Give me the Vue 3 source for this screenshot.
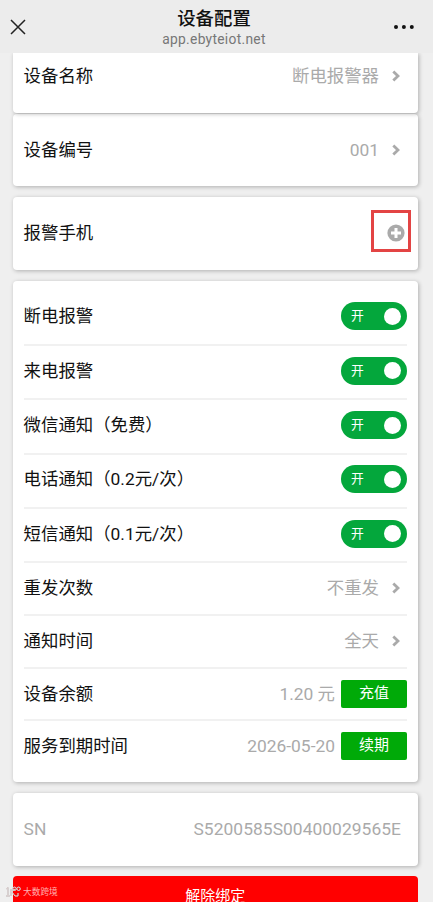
<script setup>
const switches = ['断电报警', '来电报警', '微信通知（免费）', '电话通知（0.2元/次）', '短信通知（0.1元/次）']
const choices = [
  { label: '重发次数', value: '不重发' },
  { label: '通知时间', value: '全天' },
]
const payments = [
  { label: '设备余额', value: '1.20 元', action: '充值' },
  { label: '服务到期时间', value: '2026-05-20', action: '续期' },
]
</script>

<template>
  <div class="screen">
    <header class="bar">
      <svg class="close" viewBox="0 0 16 16"><path d="M1 1L15 15M15 1L1 15" /></svg>
      <div class="heading">
        <h1>设备配置</h1>
        <p>app.ebyteiot.net</p>
      </div>
      <svg class="more" viewBox="0 0 20 6">
        <circle cx="2" cy="3" r="2" /><circle cx="9.9" cy="3" r="2" /><circle cx="17.8" cy="3" r="2" />
      </svg>
    </header>

    <main class="content">
      <section class="card name">
        <span>设备名称</span>
        <span class="value">断电报警器</span>
        <svg class="chevron" viewBox="0 0 8 12"><path d="M1.3 1.5L6 6L1.3 10.5" /></svg>
      </section>
      <section class="card single number">
        <span>设备编号</span>
        <span class="value">001</span>
        <svg class="chevron" viewBox="0 0 8 12"><path d="M1.3 1.5L6 6L1.3 10.5" /></svg>
      </section>
      <section class="card single phone">
        <span>报警手机</span>
        <button class="add">
          <svg viewBox="0 0 18 18"><circle cx="9" cy="9" r="8.6" /><path d="M9 4V14M4 9H14" /></svg>
        </button>
      </section>

      <section class="card settings">
        <div v-for="item in switches" :key="item" class="row toggle-row">
          <span>{{ item }}</span>
          <span class="switch"><span class="on">开</span><i class="knob"></i></span>
        </div>
        <div v-for="item in choices" :key="item.label" class="row choice-row">
          <span>{{ item.label }}</span>
          <span class="value">{{ item.value }}</span>
          <svg class="chevron" viewBox="0 0 8 12"><path d="M1.3 1.5L6 6L1.3 10.5" /></svg>
        </div>
        <div v-for="item in payments" :key="item.label" class="row pay-row">
          <span>{{ item.label }}</span>
          <span class="value">{{ item.value }}</span>
          <button class="pay">{{ item.action }}</button>
        </div>
      </section>

      <section class="card single serial">
        <span>SN</span>
        <span class="code">S5200585S00400029565E</span>
      </section>
      <button class="unbind">解除绑定</button>
    </main>

    <div class="watermark">
      <svg viewBox="0 0 16 12">
        <path d="M1 3L3 1.5V10M1 10H5M6 3V10M6 6L10 3M7 6L10 10H13M13 7V10" />
        <circle cx="9.5" cy="2.8" r="1.7" /><circle cx="13.6" cy="2.8" r="1.7" />
      </svg>
      <span>大数跨境</span>
    </div>
  </div>
</template>

<style>
body {
  background: #efefef;
}
</style>

<style scoped>
.screen {
  position: relative;
  box-sizing: border-box;
  height: 902px;
  overflow: hidden;
  background: #efefef;
  color: #111;
  font: 17.4px/24px Roboto, "Noto Sans CJK SC", sans-serif;
}
button {
  padding: 0;
  border: 0;
  font-family: inherit;
}
.bar {
  display: flex;
  align-items: center;
  justify-content: space-between;
  box-sizing: border-box;
  height: 53px;
  padding: 0 19px 0 10px;
  background: #ececec;
}
.close {
  width: 16px;
  height: 16px;
  fill: none;
  stroke: #222;
  stroke-width: 1.5;
}
.heading {
  padding: 1px 0 0 8px;
  text-align: center;
}
h1 {
  margin: 0;
  font-size: 18.4px;
  font-weight: 500;
  line-height: 24px;
}
p {
  margin: 0;
  color: #777;
  font-size: 13.8px;
  line-height: 17px;
  letter-spacing: 0.3px;
}
.more {
  width: 20px;
  height: 6px;
  fill: #111;
}
.content {
  display: flex;
  flex-direction: column;
  padding: 0 15px 0 12.6px;
}
.card {
  display: flex;
  align-items: center;
  box-sizing: border-box;
  padding: 0 11px;
  border-radius: 4px;
  background: #fff;
  box-shadow: 1px 1px 4px rgba(0, 0, 0, 0.27);
}
.card > span:first-child,
.row > span:first-child {
  flex: 1;
}
.name {
  height: 60px;
  padding-bottom: 13.6px;
  border-radius: 0 0 4px 4px;
  clip-path: inset(0 -6px -6px -6px);
}
.single {
  height: 73px;
  padding-bottom: 2px;
}
.number {
  height: 72px;
  margin-top: 1px;
  margin-bottom: 11px;
  padding-bottom: 1px;
}
.value {
  color: #aaa;
}
.chevron {
  width: 8px;
  height: 12px;
  margin: 0 7px 0 13px;
  fill: none;
  stroke: #aaa;
  stroke-width: 2.8;
}
.add {
  display: flex;
  align-items: center;
  justify-content: flex-end;
  box-sizing: border-box;
  width: 40px;
  height: 42px;
  margin: -3px -4px 0 0;
  padding-top: 4px;
  padding-right: 3.5px;
  border: 3px solid #e34444;
  background: none;
}
.add svg {
  width: 18px;
  height: 18px;
  fill: #aaa;
}
.add path {
  stroke: #fff;
  stroke-width: 3;
}
.settings {
  display: block;
  height: 501px;
  margin: 11px 0;
  padding-top: 10.8px;
}
.row {
  display: flex;
  align-items: center;
  box-sizing: border-box;
  border-bottom: 2px solid #f1f1f1;
}
.toggle-row {
  height: 54.3px;
  padding-bottom: 3px;
}
.choice-row {
  height: 52.8px;
  padding-bottom: 0.6px;
}
.pay-row {
  height: 52.2px;
}
.pay-row:last-child {
  height: 49px;
  border-bottom: 0;
}
.switch {
  display: flex;
  align-items: center;
  justify-content: space-between;
  box-sizing: border-box;
  width: 66px;
  height: 28px;
  padding: 0 5.6px 0 10px;
  border-radius: 14px;
  background: #04a73c;
  color: #fff;
}
.on {
  font-size: 12.8px;
}
.knob {
  flex: none;
  width: 17px;
  height: 17px;
  border-radius: 50%;
  background: #fff;
}
.pay {
  width: 66px;
  height: 28px;
  margin-left: 6px;
  border-radius: 2px;
  background: #00aa08;
  color: #fff;
  font-size: 15px;
  line-height: 27px;
}
.serial {
  color: #aaa;
  padding-right: 17px;
}
.code {
  letter-spacing: 0.05px;
}
.unbind {
  height: 42px;
  margin-top: 10px;
  border-radius: 4px 4px 0 0;
  background: #f00;
  color: #fff;
  font-size: 15px;
  line-height: 40px;
  padding-bottom: 2px;
}
.watermark {
  position: absolute;
  left: 5px;
  bottom: 3px;
  display: flex;
  align-items: center;
  gap: 2px;
  color: rgba(255, 235, 235, 0.75);
  font-size: 8.7px;
  line-height: 14px;
}
.watermark svg {
  width: 16px;
  height: 12px;
  fill: none;
  stroke: rgba(240, 225, 225, 0.85);
  stroke-width: 1;
  filter: drop-shadow(0 0 0.5px #888);
}
</style>
